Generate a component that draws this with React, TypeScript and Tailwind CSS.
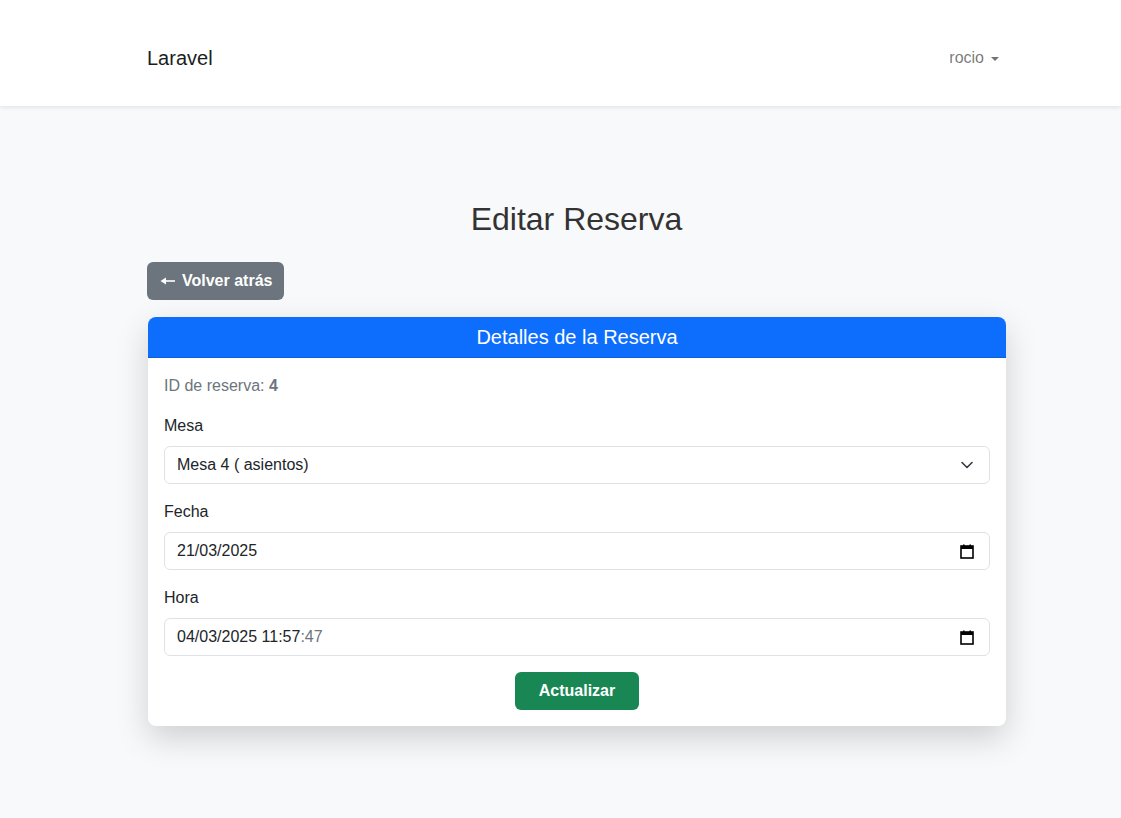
import React from "react"

const font = { fontFamily: '"Liberation Sans", Arial, sans-serif' }

function Chevron() {
  return (
    <svg width="12" height="8" viewBox="0 0 12 8" fill="none">
      <path d="M1 1.5l5 5 5-5" stroke="#343a40" strokeWidth="1.6" strokeLinecap="round" strokeLinejoin="round" />
    </svg>
  )
}

function CalendarIcon() {
  return (
    <svg width="14" height="15" viewBox="0 0 14 15" fill="none">
      <rect x="1" y="2" width="12" height="12" stroke="#000" strokeWidth="1.6" fill="none" />
      <rect x="1" y="2" width="12" height="3" fill="#000" />
      <rect x="3" y="0.5" width="1.6" height="2" fill="#000" />
      <rect x="9.4" y="0.5" width="1.6" height="2" fill="#000" />
    </svg>
  )
}

function Field({ label, children }: { label: string; children: React.ReactNode }) {
  return (
    <div className="mb-4">
      <div className="mb-2 text-[16px] leading-6 text-[#212529]">{label}</div>
      {children}
    </div>
  )
}

export default function App() {
  return (
    <div className="min-h-[818px] bg-[#f8f9fa] text-[#212529]" style={font}>
      <nav className="h-[106px] bg-white pt-[10px] shadow-[0_2px_4px_rgba(0,0,0,0.08)]">
        <div className="ml-[147px] flex h-full w-[852px] items-center justify-between">
          <span className="text-[20px] text-[#1b1e21]">Laravel</span>
          <span className="flex items-center gap-[7px] text-[16px] text-[rgba(0,0,0,0.55)]">
            rocio
            <span className="mt-[2px] h-0 w-0 border-x-[4px] border-t-[4px] border-x-transparent border-t-[rgba(0,0,0,0.55)]" />
          </span>
        </div>
      </nav>

      <main className="ml-[147px] w-[859px] pt-[94px]">
        <h2 className="mb-6 text-center text-[32px] leading-[38px] text-[#333]">Editar Reserva</h2>

        <button className="mb-[17px] flex h-[38px] items-center gap-[7px] rounded-[6px] bg-[#6c757d] pl-[13px] pr-3 text-[16px] font-bold text-white">
          <svg width="15" height="10" viewBox="0 0 15 10">
            <path d="M15 4.2H5V5.8H15Z" fill="#fff" />
            <path d="M0.5 5L6 1.5V8.5Z" fill="#fff" />
          </svg>
          Volver atrás
        </button>

        <div className="ml-px overflow-hidden rounded-[8px] bg-white shadow-[0_12px_32px_rgba(0,0,0,0.17)]">
          <div className="flex h-[41px] items-center justify-center border-b border-[#0b5ed7] bg-[#0d6efd] text-[20px] text-white">
            Detalles de la Reserva
          </div>
          <div className="p-4">
            <p className="mb-4 text-[16px] leading-6 text-[#6c757d]">
              ID de reserva: <strong className="font-bold">4</strong>
            </p>

            <Field label="Mesa">
              <div className="flex h-[38px] items-center justify-between rounded-[6px] border border-[#dee2e6] bg-white pl-3 pr-[16px] text-[16px]">
                <span>Mesa 4 ( asientos)</span>
                <Chevron />
              </div>
            </Field>

            <Field label="Fecha">
              <div className="flex h-[38px] items-center justify-between rounded-[6px] border border-[#dee2e6] bg-white pl-3 pr-[15px] text-[16px]">
                <span>21/03/2025</span>
                <CalendarIcon />
              </div>
            </Field>

            <Field label="Hora">
              <div className="flex h-[38px] items-center justify-between rounded-[6px] border border-[#dee2e6] bg-white pl-3 pr-[15px] text-[16px]">
                <span>
                  04/03/2025 11:57<span className="text-[#6c757d]">:47</span>
                </span>
                <CalendarIcon />
              </div>
            </Field>

            <div className="flex justify-center">
              <button className="h-[38px] rounded-[6px] bg-[#198754] px-6 text-[16px] font-bold text-white">
                Actualizar
              </button>
            </div>
          </div>
        </div>
      </main>
    </div>
  )
}
